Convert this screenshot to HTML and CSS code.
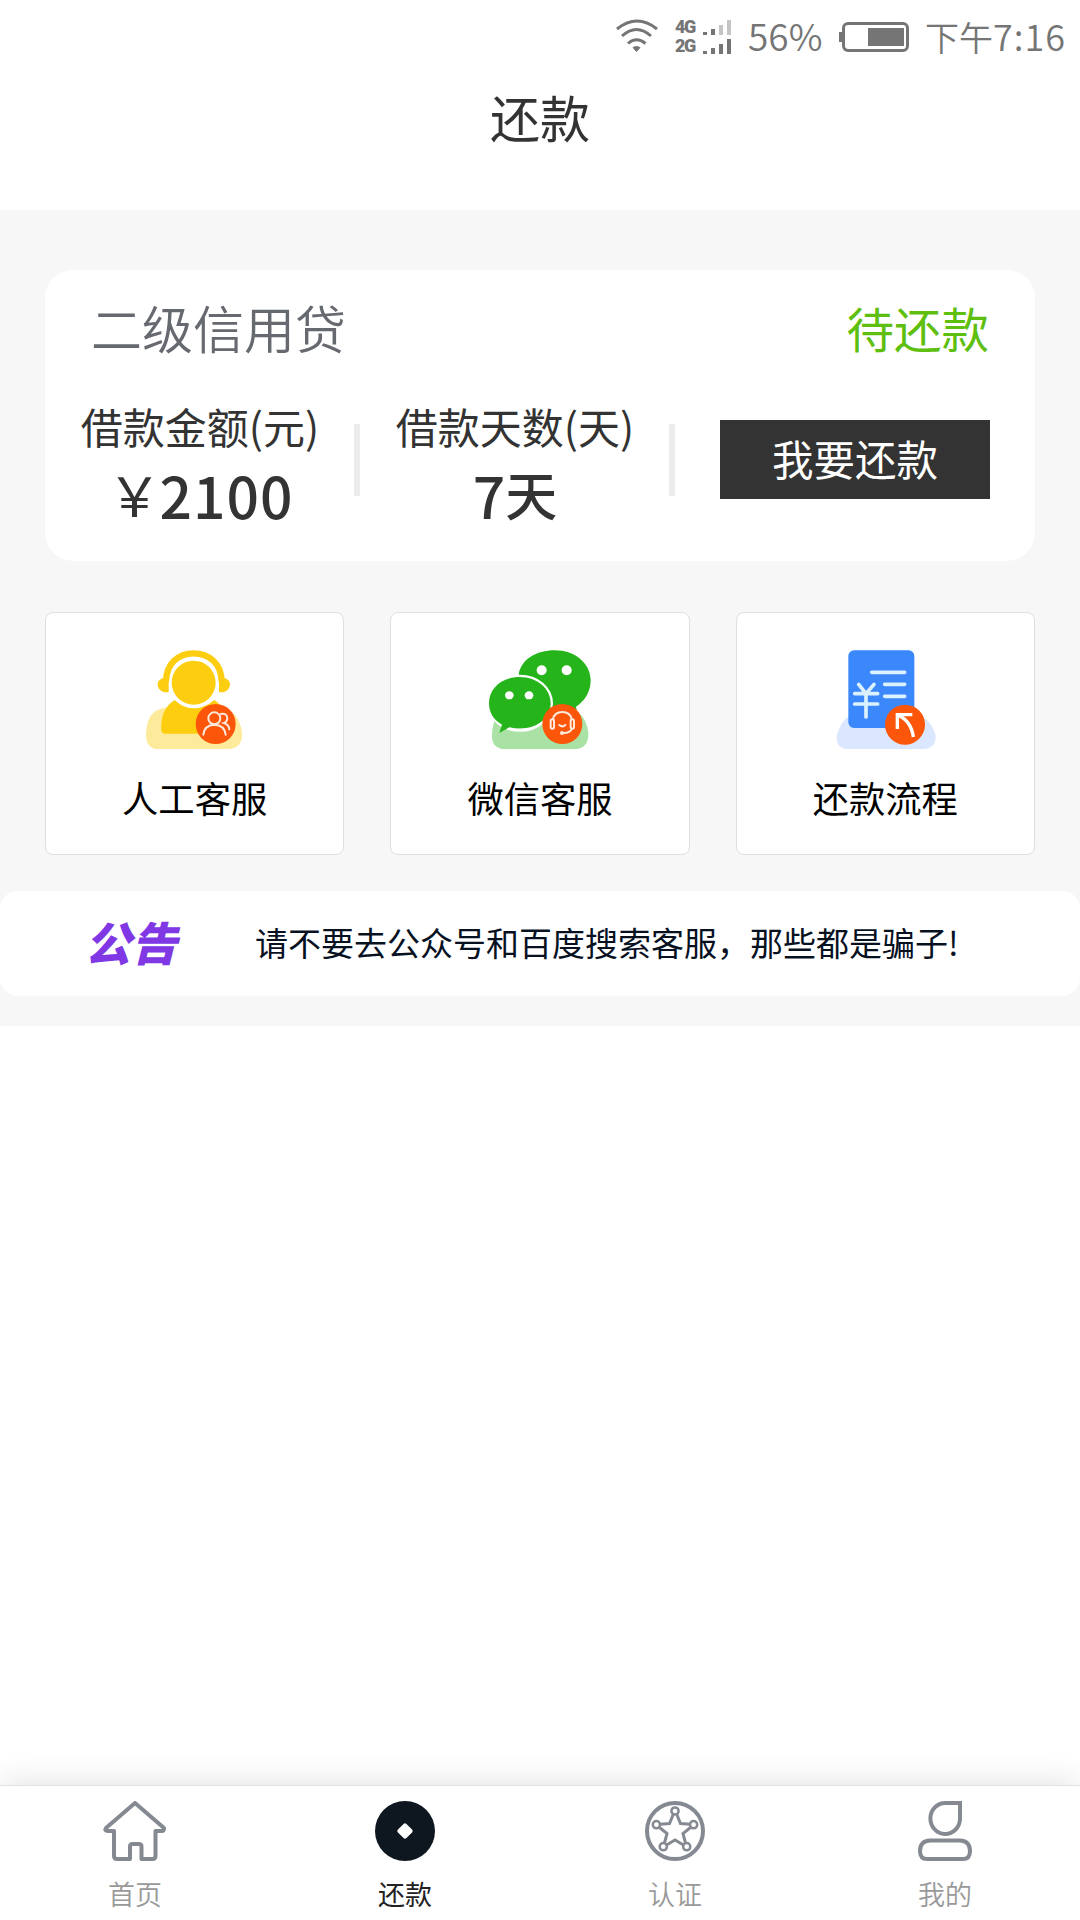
FILE: index.html
```html
<!DOCTYPE html>
<html lang="zh-CN">
<head>
<meta charset="utf-8">
<meta name="viewport" content="width=device-width">
<title>还款</title>
<link rel="stylesheet" href="styles.css">
</head>
<body>
<div class="screen">
  <div class="statusbar">
    <svg class="wifi" width="42" height="36" viewBox="0 0 42 36" fill="none" stroke="#757575" stroke-width="3">
      <path d="M1 10Q21-6 41 10M6 17Q20.500 4 35 17M12 24.500Q20.500 17 29.500 24.500"/>
      <path d="M17 28.500Q20.500 26.500 24 28.500L20.500 32.500Z" fill="#757575" stroke-width="1"/>
    </svg>
    <div class="networks">
      <div class="network">
        <span class="net-name">4G</span>
        <svg width="29" height="16" viewBox="0 0 29 16" fill="#757575"><path d="M0 13h4v3H0zM8 10h4v6H8z"/><path fill="#c4c4c4" d="M16 6h4v10h-4zM24 1h4v15h-4z"/></svg>
      </div>
      <div class="network">
        <span class="net-name">2G</span>
        <svg width="29" height="16" viewBox="0 0 29 16" fill="#757575"><path d="M0 13h4v3H0zM8 10h4v6H8zM16 6h4v10h-4zM24 1h4v15h-4z"/></svg>
      </div>
    </div>
    <span class="percent">56%</span>
    <svg class="battery" width="70" height="30" viewBox="0 0 70 30">
      <rect x="4.500" y="1.500" width="64" height="27" rx="4.500" fill="none" stroke="#757575" stroke-width="3"/>
      <path fill="#757575" d="M0 10h4v10H0zM29 6h36v18H29z"/>
    </svg>
    <span class="clock">下午<span class="time">7:16</span></span>
  </div>
  <header class="header"><h1 class="title">还款</h1></header>

  <main class="content">
    <section class="loan">
      <div class="loan-head">
        <span class="loan-name">二级信用贷</span>
        <span class="loan-status">待还款</span>
      </div>
      <div class="loan-body">
        <div class="figure">
          <span class="label">借款金额(元)</span>
          <span class="value money"><span class="yen">￥</span>2100</span>
        </div>
        <div class="figure">
          <span class="label">借款天数(天)</span>
          <span class="value"><span class="days">7</span>天</span>
        </div>
        <button class="repay">我要还款</button>
      </div>
    </section>

    <section class="services">
      <a class="service">
        <svg width="100" height="100" viewBox="345 149 300 300">
          <path fill="#fdeb9b" d="M377 446Q347 440 348 402Q350 325 410 322H575Q625 330 636 395Q640 440 600 446Z"/>
          <path fill="#fdcd10" d="M394 388Q391 325 434 299Q490 350 553 299Q590 320 590 400H407Q394 400 394 388Z"/>
          <circle cx="491" cy="247" r="76" fill="#fff"/>
          <circle cx="491" cy="247" r="66" fill="#fdcd10"/>
          <path d="M408 245C408 190 445 159 491 159S575 190 575 245" fill="none" stroke="#fdcd10" stroke-width="19"/>
          <path fill="#fdcd10" d="M400 233H416V276H403Q383 271 383 252Q384 237 400 233ZM583 233H567V276H580Q600 271 600 252Q599 237 583 233Z"/>
          <circle cx="557" cy="371" r="60" fill="#fb560a"/>
          <g fill="none" stroke="#ffe9dc" stroke-width="6" stroke-linecap="round"><circle cx="553" cy="354" r="18"/><path d="M520 403Q523 374 553 373Q584 374 587 403M572 341Q592 337 592 355Q591 365 582 368Q597 373 598 387"/></g>
        </svg>
        <span>人工客服</span>
      </a>
      <a class="service">
        <svg width="104" height="100" viewBox="324 149 312 300">
          <path fill="#aae2a6" d="M364 446Q334 440 336 402Q340 325 395 322H560Q615 330 625 395Q628 440 590 446Z"/>
          <path fill="#25b51a" d="M416 222C424 177 468 150 524 150C586 150 632 190 632 240C632 274 614 303 588 319L594 350L500 340Z"/>
          <ellipse cx="420" cy="309" rx="99" ry="86" fill="#fff"/>
          <path fill="#aae2a6" d="M340 375Q360 394 400 394H500L516 345L524 420H338Z"/>
          <path fill="#25b51a" d="M358 398L366 373C342 360 327 338 327 309C327 263 366 230 419 230C472 230 512 265 512 309C512 363 454 396 388 381Z"/>
          <g fill="#fff"><circle cx="485" cy="210" r="15"/><circle cx="560" cy="210" r="15"/><ellipse cx="388" cy="285" rx="13" ry="12"/><ellipse cx="447" cy="285" rx="13" ry="12"/></g>
          <circle cx="547" cy="371" r="60" fill="#fb560a"/>
          <g fill="none" stroke="#ffe9dc" stroke-width="6" stroke-linecap="round"><path d="M519 357Q523 335 547 335T575 357M576 385Q570 399 548 398M538 374Q547 382 556 374"/><rect x="512" y="357" width="10" height="28" rx="5"/><rect x="572" y="357" width="10" height="28" rx="5"/><circle cx="546" cy="398" r="3"/></g>
        </svg>
        <span>微信客服</span>
      </a>
      <a class="service">
        <svg width="100" height="100" viewBox="346 149 300 300" overflow="visible">
          <path fill="#dbe7fe" d="M380 446Q344 440 353 401Q367 350 405 340H590Q634 355 648 405Q650 440 618 446Z"/>
          <rect x="386" y="150" width="198" height="233" rx="17" fill="#3b88fd"/>
          <g fill="none" stroke="#dcf1ff" stroke-width="11" stroke-linecap="round"><path d="M456 216H555M495 252H555M495 288H555M405 280H474M405 311H474M417 252L439 280L463 252M439 280V350"/></g>
          <circle cx="556" cy="373" r="60" fill="#fb560a"/>
          <path d="M533 386V343H578M535 345Q574 360 581 410" fill="none" stroke="#fff" stroke-width="10"/>
        </svg>
        <span>还款流程</span>
      </a>
    </section>

    <section class="notice">
      <span class="notice-tag">公告</span>
      <p class="notice-text">请不要去公众号和百度搜索客服，那些都是骗子!</p>
    </section>
  </main>

  <nav class="tabbar">
    <a class="tab">
      <svg width="70" height="60" viewBox="100 61 70 60" fill="none" stroke="#858a92" stroke-width="4" stroke-linejoin="round"><path d="M135 63L164 88Q164 91 162 91H155.500V116Q155.500 119 152.500 119H141.500V106.500Q141.500 104 139 104H132.500Q130 104 130 106.500V119H117Q114 119 114 116V91H108Q104 91 106 88Z"/></svg>
      <span>首页</span>
    </a>
    <a class="tab active">
      <svg width="70" height="60" viewBox="0 0 70 60"><circle cx="35" cy="30" r="30" fill="#0e1720"/><rect x="29" y="24" width="12" height="12" rx="2" fill="#fff" transform="rotate(45 35 30)"/></svg>
      <span>还款</span>
    </a>
    <a class="tab">
      <svg width="70" height="60" viewBox="100 61 70 60" fill="none" stroke="#858a92" stroke-width="3"><circle cx="135" cy="91" r="28" stroke-width="4"/><g stroke-width="2.500"><circle cx="135" cy="71" r="3.600"/><circle cx="153.600" cy="84.700" r="3.600"/><circle cx="146.700" cy="106.700" r="3.600"/><circle cx="123.300" cy="106.700" r="3.600"/><circle cx="116.400" cy="84.700" r="3.600"/></g><path d="M133 75L129.500 83.500L120 84.300M119.500 87.500L127 93.500L124.500 103M126.500 105L135 100L143.500 105M145.500 103L143 93.500L150.500 87.500M150 84.300L140.500 83.500L137 75"/></svg>
      <span>认证</span>
    </a>
    <a class="tab">
      <svg width="70" height="60" viewBox="370 61 70 60" fill="none" stroke="#858a92" stroke-width="4"><path d="M405.300 63H420V79A14.800 15.500 0 1 1 405.300 63Z"/><path d="M390 100.500H420Q430 101 430 111Q430 119 423 119H387Q380 119 380 111Q380 101 390 100.500Z"/></svg>
      <span>我的</span>
    </a>
  </nav>
</div>
</body>
</html>
```
FILE: styles.css
```css
* {
  box-sizing: border-box;
}

body {
  margin: 0;
  background: #fff;
  color: #333;
  font-family: "Noto Sans CJK SC", sans-serif;
}

.screen {
  width: 1080px;
  height: 1920px;
  display: flex;
  flex-direction: column;
  overflow: hidden;
}

.statusbar {
  height: 74px;
  padding-right: 12px;
  display: flex;
  align-items: center;
  justify-content: flex-end;
  color: #757575;
  white-space: nowrap;
}

.wifi {
  margin-right: 17px;
}

.networks {
  width: 57px;
  margin-right: 16px;
  padding-bottom: 2px;
}

.network {
  height: 19px;
  display: flex;
  align-items: center;
  justify-content: space-between;
}

.net-name {
  font: 900 18px/19px Roboto, sans-serif;
  letter-spacing: -1.500px;
}

.percent {
  width: 91px;
  padding-bottom: 4px;
  font: 350 37px/40px "Noto Sans CJK SC", sans-serif;
}

.battery {
  margin-right: 16px;
}

.clock {
  width: 143px;
  padding-bottom: 2px;
  font: 350 34px/40px "Noto Sans CJK SC", sans-serif;
}

.time {
  font-size: 36px;
  letter-spacing: 1px;
}

.header {
  height: 136px;
  display: flex;
  justify-content: center;
}

.title {
  margin: 9px 0 0;
  font-size: 50px;
  font-weight: 400;
  line-height: 66px;
}

.content {
  height: 816px;
  padding-top: 60px;
  background: #f7f7f7;
}

.loan {
  height: 291px;
  margin: 0 45px;
  border-radius: 28px;
  background: #fff;
}

.loan-head {
  height: 120px;
  padding: 0 46px 6px;
  display: flex;
  align-items: center;
  justify-content: space-between;
}

.loan-name {
  font-size: 51px;
  font-weight: 350;
  color: #66696f;
}

.loan-status {
  font-size: 47.500px;
  color: #5fbf10;
}

.loan-body {
  display: flex;
  align-items: center;
  height: 140px;
}

.figure {
  width: 315px;
  height: 134px;
  padding-right: 5px;
  display: flex;
  flex-direction: column;
  align-items: center;
  background: linear-gradient(#ececec, #ececec) right center / 6px 72px no-repeat;
}

.label {
  font-size: 42px;
  line-height: 66px;
}

.value {
  display: flex;
  align-items: center;
  font-size: 52px;
  font-weight: 500;
  line-height: 70px;
}

.money {
  padding-left: 1px;
  font-size: 57px;
  letter-spacing: 1px;
}

.yen {
  font-size: 54px;
  font-weight: 400;
  letter-spacing: -2px;
}

.days {
  font-size: 57px;
}

.repay {
  width: 270px;
  height: 79px;
  margin: 0 0 2px 45px;
  padding: 0 0 3px;
  border: 0;
  background: #333;
  color: #fff;
  font: 400 41.500px/76px "Noto Sans CJK SC", sans-serif;
}

.services {
  margin: 51px 45px 0;
  display: grid;
  grid-template-columns: repeat(3, 1fr);
  gap: 46px;
}

.service {
  height: 243px;
  padding-top: 37px;
  border: 1px solid #dfdfdf;
  border-radius: 8px;
  background: #fff;
  display: flex;
  flex-direction: column;
  align-items: center;
  gap: 20px;
  color: #000;
  font-size: 36.300px;
  font-weight: 400;
  line-height: 54px;
}

.notice {
  height: 105px;
  margin-top: 36px;
  padding: 0 0 4px 85px;
  border-radius: 18px;
  background: #fff;
  display: flex;
  align-items: center;
}

.notice-tag {
  width: 170px;
  padding-bottom: 2px;
  color: #8038e5;
  font-size: 46px;
  font-weight: 900;
  font-style: italic;
}

.notice-text {
  margin: 0;
  color: #07111f;
  font-size: 33px;
  white-space: nowrap;
}

.tabbar {
  height: 135px;
  margin-top: auto;
  border-top: 1px solid #e2e2e2;
  box-shadow: 0 0 32px rgba(0, 0, 0, .13);
  display: grid;
  grid-template-columns: repeat(4, 1fr);
}

.tab {
  padding-top: 15px;
  display: flex;
  flex-direction: column;
  align-items: center;
  gap: 15px;
  color: #999;
  font-size: 27px;
  font-weight: 350;
  line-height: 36px;
}

.active {
  color: #222;
  font-weight: 400;
}
```
